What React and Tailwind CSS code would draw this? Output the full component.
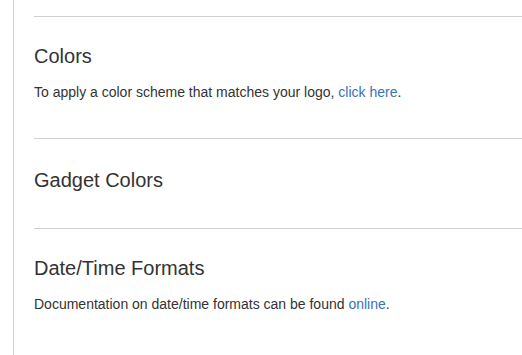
export default function App() {
  return (
    <div className="flex h-[355px] w-full overflow-hidden bg-white text-[#333333] font-['Liberation_Sans',Arial,sans-serif]">
      {/* left gutter */}
      <div className="w-[14px] shrink-0 border-r border-[#d4d4d4]" />

      <div className="flex-1 pl-[20px] pt-[16px]">
        {/* COLORS */}
        <section className="border-t border-[#d0d0d0] pt-[28px] pb-[36px]">
          <h3 className="text-[20px] leading-[22px]">Colors</h3>
          <p className="mt-[15px] text-[14px] leading-[20px]">
            To apply a color scheme that matches your logo,{" "}
            <a href="#" className="text-[#3a72b6]">click here</a>.
          </p>
        </section>

        {/* GADGET COLORS */}
        <section className="border-t border-[#d0d0d0] pt-[30px] pb-[37px]">
          <h3 className="text-[20px] leading-[22px]">Gadget Colors</h3>
        </section>

        {/* DATE/TIME */}
        <section className="border-t border-[#d0d0d0] pt-[28px]">
          <h3 className="text-[20px] leading-[22px]">Date/Time Formats</h3>
          <p className="mt-[15px] text-[14px] leading-[20px]">
            Documentation on date/time formats can be found{" "}
            <a href="#" className="text-[#3a72b6]">online</a>.
          </p>
        </section>
      </div>
    </div>
  );
}
